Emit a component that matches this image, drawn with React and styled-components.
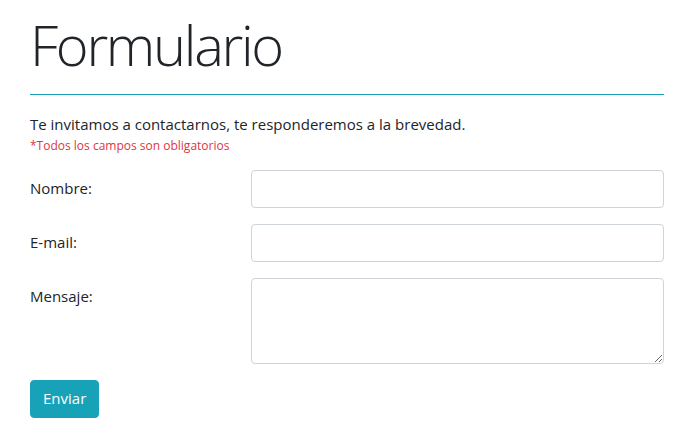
import React from "react";
import styled, { createGlobalStyle } from "styled-components";

const GlobalStyle = createGlobalStyle`
  * { box-sizing: border-box; }
  body {
    margin: 0;
    background: #fff;
    color: #212529;
    font-family: "Open Sans", "Noto Sans", sans-serif;
    font-size: 16px;
    line-height: 1.5;
  }
`;

const Page = styled.div`
  padding: 11px 25px 20px 30px;
  width: 689px;
`;

const Title = styled.h1`
  margin: 0;
  font-size: 56px;
  font-weight: 300;
  line-height: 1.2;
  color: #212529;
  letter-spacing: -2.3px;
`;

const Rule = styled.div`
  height: 1px;
  margin: 16px 0 18px;
  background: #17a2b8;
`;

const Intro = styled.p`
  margin: 0;
  font-size: 15px;
`;

const Required = styled.small`
  display: block;
  margin-top: 1px;
  font-size: 12px;
  color: #dc3545;
  margin-bottom: 15px;
`;

const Row = styled.div`
  display: grid;
  grid-template-columns: 221px 1fr;
  margin-bottom: 16px;
`;

const Label = styled.label`
  padding-top: 7px;
  font-size: 15px;
`;

const Field = styled.input`
  display: block;
  width: 100%;
  height: 38px;
  padding: 6px 12px;
  font: inherit;
  border: 1px solid #ced4da;
  border-radius: 4px;
  background: #fff;
`;

const Area = styled.textarea`
  display: block;
  width: 100%;
  height: 86px;
  padding: 6px 12px;
  font: inherit;
  border: 1px solid #ced4da;
  border-radius: 4px;
  resize: vertical;
`;

const Submit = styled.button`
  height: 38px;
  padding: 0 12px;
  border: 1px solid #17a2b8;
  border-radius: 4px;
  background: #17a2b8;
  color: #fff;
  font: inherit;
  font-size: 15px;
  cursor: pointer;
`;

export default function App() {
  return (
    <>
      <GlobalStyle />
      <Page>
        <Title>Formulario</Title>
        <Rule />
        <Intro>Te invitamos a contactarnos, te responderemos a la brevedad.</Intro>
        <Required>*Todos los campos son obligatorios</Required>
        <form onSubmit={e => e.preventDefault()}>
          <Row>
            <Label htmlFor="nombre">Nombre:</Label>
            <Field id="nombre" type="text" />
          </Row>
          <Row>
            <Label htmlFor="email">E-mail:</Label>
            <Field id="email" type="email" />
          </Row>
          <Row>
            <Label htmlFor="mensaje">Mensaje:</Label>
            <Area id="mensaje" />
          </Row>
          <Submit type="submit">Enviar</Submit>
        </form>
      </Page>
    </>
  );
}
